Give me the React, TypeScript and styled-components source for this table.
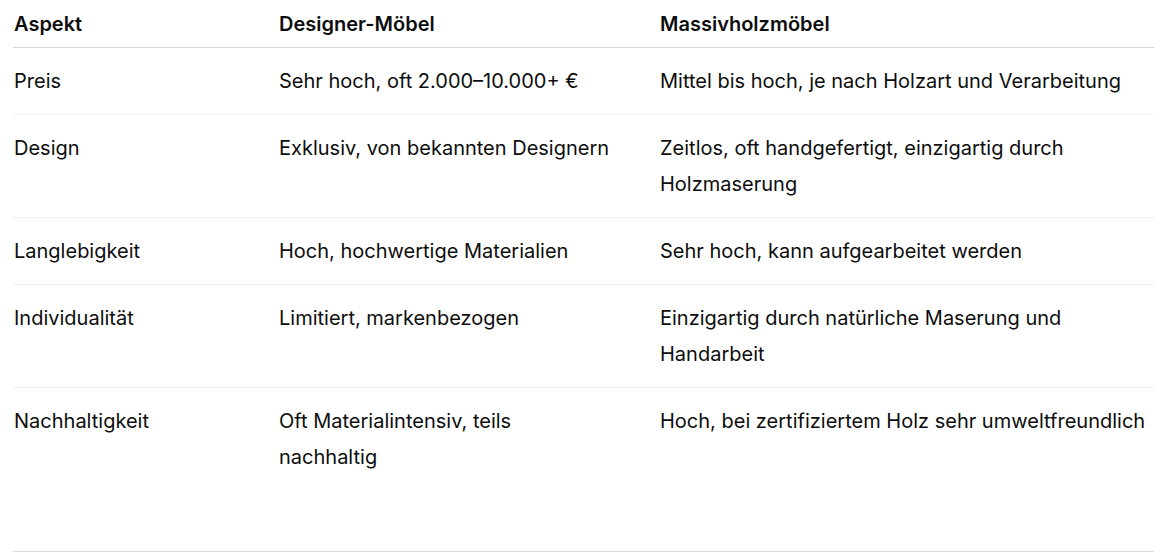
import React from "react";
import styled, { createGlobalStyle } from "styled-components";

const GlobalStyle = createGlobalStyle`
  html, body {
    margin: 0;
    padding: 0;
    background: #fff;
  }
  body {
    font-family: Inter, "Noto Sans", "Liberation Sans", sans-serif;
    color: #0d0d0d;
    -webkit-font-smoothing: antialiased;
  }
`;

const Wrapper = styled.div`
  width: 1141px;
  margin-left: 13px;
  padding-bottom: 60px;
  border-bottom: 1px solid #dcdcdc;
`;

const Row = styled.div<{ $head?: boolean; $last?: boolean }>`
  display: grid;
  grid-template-columns: 265px 381px 1fr;
  border-bottom: 1px solid ${({ $head, $last }) => ($last ? "transparent" : $head ? "#d6d6d6" : "#efefef")};
  padding: ${({ $head }) => ($head ? "6px 0 5px" : "15px 0")};
`;

const Cell = styled.div<{ $head?: boolean }>`
  font-size: 20px;
  line-height: 36px;
  font-weight: ${({ $head }) => ($head ? 600 : 400)};
  padding-left: 1px;
  padding-right: 46px;

  &:last-child {
    padding-right: 0;
  }
`;

const rows: [string, string, string][] = [
  ["Preis", "Sehr hoch, oft 2.000–10.000+ €", "Mittel bis hoch, je nach Holzart und Verarbeitung"],
  ["Design", "Exklusiv, von bekannten Designern", "Zeitlos, oft handgefertigt, einzigartig durch Holzmaserung"],
  ["Langlebigkeit", "Hoch, hochwertige Materialien", "Sehr hoch, kann aufgearbeitet werden"],
  ["Individualität", "Limitiert, markenbezogen", "Einzigartig durch natürliche Maserung und Handarbeit"],
  ["Nachhaltigkeit", "Oft Materialintensiv, teils nachhaltig", "Hoch, bei zertifiziertem Holz sehr umweltfreundlich"],
];

const App: React.FC = (): React.ReactElement => (
  <>
    <GlobalStyle />
    <Wrapper>
      <Row $head>
        <Cell $head>Aspekt</Cell>
        <Cell $head>Designer-Möbel</Cell>
        <Cell $head>Massivholzmöbel</Cell>
      </Row>
      {rows.map((r, i) => (
        <Row key={r[0]} $last={i === rows.length - 1}>
          <Cell>{r[0]}</Cell>
          <Cell>{r[1]}</Cell>
          <Cell>{r[2]}</Cell>
        </Row>
      ))}
    </Wrapper>
  </>
);

export default App;
